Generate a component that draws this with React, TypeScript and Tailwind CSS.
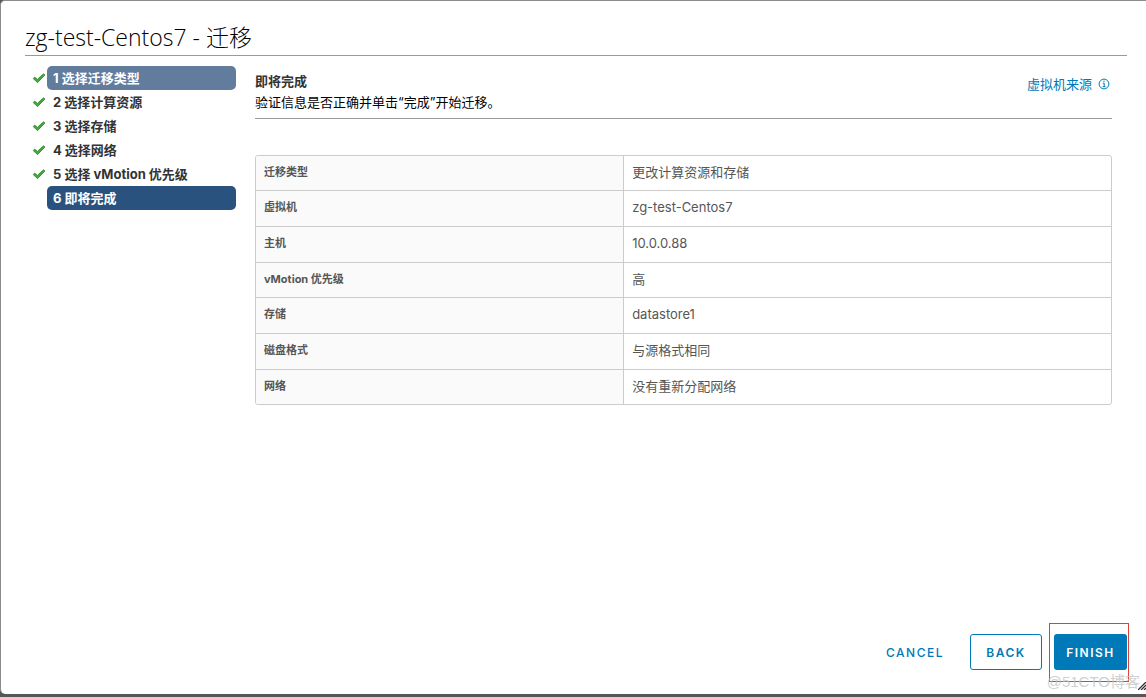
const steps = [
  { label: "1 选择迁移类型", done: true, state: "visited" },
  { label: "2 选择计算资源", done: true, state: "plain" },
  { label: "3 选择存储", done: true, state: "plain" },
  { label: "4 选择网络", done: true, state: "plain" },
  { label: "5 选择 vMotion 优先级", done: true, state: "plain" },
  { label: "6 即将完成", done: false, state: "current" },
] as const;

const stepStyles = {
  visited: "bg-[#617c9d] text-white",
  plain: "text-[#333333]",
  current: "bg-[#2a527f] text-white",
};

const summary = [
  { name: "迁移类型", value: "更改计算资源和存储" },
  { name: "虚拟机", value: "zg-test-Centos7" },
  { name: "主机", value: "10.0.0.88" },
  { name: "vMotion 优先级", value: "高" },
  { name: "存储", value: "datastore1" },
  { name: "磁盘格式", value: "与源格式相同" },
  { name: "网络", value: "没有重新分配网络" },
];

function CheckMark() {
  return (
    <svg width="14" height="12" viewBox="0 0 14 12" aria-hidden="true">
      <path
        d="M1.2 6.6 L2.8 5.2 L5.4 7.4 L11.6 1.8 L12.8 3 L5.6 10.6 Z"
        fill="#45a83b"
        stroke="#2f8a2c"
        strokeWidth="0.9"
        strokeLinejoin="round"
      />
    </svg>
  );
}

function InfoIcon() {
  return (
    <svg width="12" height="12" viewBox="0 0 12 12" fill="none" stroke="#0079b8" aria-hidden="true">
      <circle cx="6" cy="6" r="4.9" strokeWidth="1" />
      <path d="M4.8 5.2H6.2V8.6M4.6 8.7H7.6" strokeWidth="1" />
      <circle cx="6" cy="3.3" r="0.7" fill="#0079b8" stroke="none" />
    </svg>
  );
}

function StepList() {
  return (
    <nav className="w-[211px] shrink-0">
      <ol>
        {steps.map((step) => (
          <li key={step.label} className="flex h-6 items-center">
            <span className="flex w-[22px] shrink-0 justify-end pr-px">{step.done && <CheckMark />}</span>
            <button
              type="button"
              className={`h-6 flex-1 rounded-[5px] px-1.5 text-left text-[13px] leading-6 font-bold ${stepStyles[step.state]}`}
            >
              {step.label}
            </button>
          </li>
        ))}
      </ol>
    </nav>
  );
}

function SummaryTable() {
  return (
    <div className="mt-9 overflow-hidden rounded-[3px] border border-[#cccccc]">
      <table className="h-[248px] w-full table-fixed border-collapse">
        <tbody>
          {summary.map((row) => (
            <tr key={row.name} className="border-b border-[#cccccc] last:border-b-0">
              <th
                scope="row"
                className="w-[43%] border-r border-[#cccccc] bg-[#fafafa] px-2 pt-1.5 text-left align-top text-[11px] leading-5 font-bold text-[#565656]"
              >
                {row.name}
              </th>
              <td className="px-2 pt-1.5 align-top text-[13px] leading-5 text-[#565656]">{row.value}</td>
            </tr>
          ))}
        </tbody>
      </table>
    </div>
  );
}

export default function App() {
  return (
    <div className="flex min-h-screen flex-col bg-[#565656] pb-[3px] font-['Inter','Noto_Sans_CJK_SC',sans-serif]">
      <section
        role="dialog"
        aria-labelledby="wizard-title"
        className="relative flex flex-1 flex-col rounded-l-[5px] border-t border-l border-[#8c8c8c] bg-white pt-5 pr-[19px] pb-6 pl-6"
      >
        <h1
          id="wizard-title"
          className="border-b border-[#9a9a9a] pb-0.5 font-['Open_Sans','Noto_Sans_CJK_SC',sans-serif] text-[23px] leading-8 font-light text-black"
        >
          zg-test-Centos7 - 迁移
        </h1>

        <div className="flex flex-1 gap-[19px] pt-2.5">
          <StepList />
          <main className="min-w-0 flex-1 pr-[15px]">
            <header className="flex items-start justify-between border-b border-[#9a9a9a] pt-1 pb-1.5">
              <div>
                <h2 className="text-[13px] leading-[22px] font-bold text-[#333333]">即将完成</h2>
                <p className="text-[13px] leading-5 text-black">验证信息是否正确并单击“完成”开始迁移。</p>
              </div>
              <a href="#origin" className="flex items-center gap-1.5 pt-1 pr-0.5 text-[13px] leading-5 text-[#0079b8]">
                虚拟机来源
                <InfoIcon />
              </a>
            </header>
            <SummaryTable />
          </main>
        </div>

        <footer className="flex items-center justify-end text-[12px] font-semibold tracking-[1.5px]">
          <button type="button" className="h-9 px-3 pt-0.5 font-medium text-[#0079b8]">
            CANCEL
          </button>
          <button
            type="button"
            className="ml-3.5 h-9 w-[72px] rounded-[3px] border border-[#0079b8] pt-0.5 text-center text-[#0079b8]"
          >
            BACK
          </button>
          <div className="relative ml-3">
            <button type="button" className="h-9 w-[73px] rounded-[3px] bg-[#0079b8] pt-0.5 text-center text-white">
              FINISH
            </button>
            <span className="pointer-events-none absolute -top-[11px] -right-0.5 -bottom-3 -left-[5px] border border-[#d9423c]" />
          </div>
        </footer>

        <span className="pointer-events-none absolute right-1.5 bottom-0.5 font-['Liberation_Sans','Noto_Sans_CJK_SC',sans-serif] text-[15px] leading-5 text-[#c4c4c4]/80">
          @51CTO博客
        </span>
        <svg className="absolute right-0 bottom-1" width="8" height="8" viewBox="0 0 8 8" stroke="#333333" aria-hidden="true">
          <path d="M0 8 L8 0 M3 8 L8 3 M6 8 L8 6" strokeWidth="1.3" />
        </svg>
      </section>
    </div>
  );
}
